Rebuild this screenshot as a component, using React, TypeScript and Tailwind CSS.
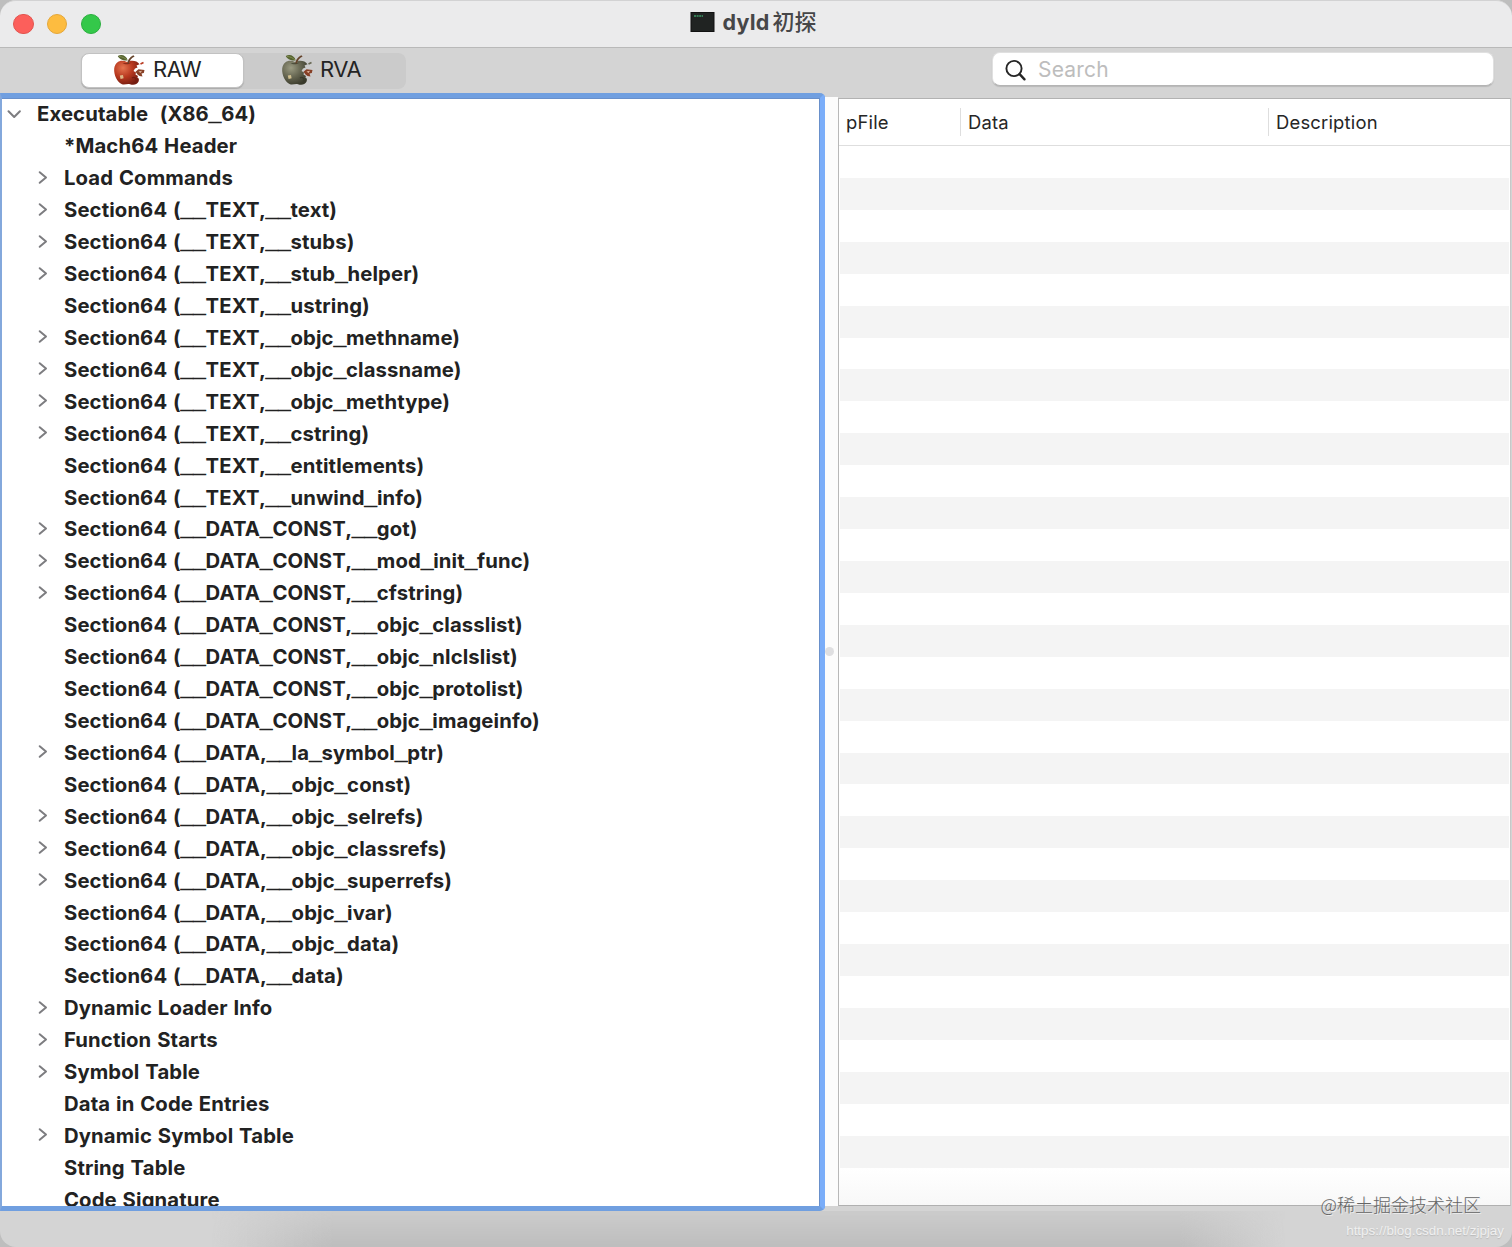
import React from "react";

type Row = { label: string; arrow?: boolean };

const ROWS: Row[] = [
  { label: "*Mach64 Header" },
  { label: "Load Commands", arrow: true },
  { label: "Section64 (__TEXT,__text)", arrow: true },
  { label: "Section64 (__TEXT,__stubs)", arrow: true },
  { label: "Section64 (__TEXT,__stub_helper)", arrow: true },
  { label: "Section64 (__TEXT,__ustring)" },
  { label: "Section64 (__TEXT,__objc_methname)", arrow: true },
  { label: "Section64 (__TEXT,__objc_classname)", arrow: true },
  { label: "Section64 (__TEXT,__objc_methtype)", arrow: true },
  { label: "Section64 (__TEXT,__cstring)", arrow: true },
  { label: "Section64 (__TEXT,__entitlements)" },
  { label: "Section64 (__TEXT,__unwind_info)" },
  { label: "Section64 (__DATA_CONST,__got)", arrow: true },
  { label: "Section64 (__DATA_CONST,__mod_init_func)", arrow: true },
  { label: "Section64 (__DATA_CONST,__cfstring)", arrow: true },
  { label: "Section64 (__DATA_CONST,__objc_classlist)" },
  { label: "Section64 (__DATA_CONST,__objc_nlclslist)" },
  { label: "Section64 (__DATA_CONST,__objc_protolist)" },
  { label: "Section64 (__DATA_CONST,__objc_imageinfo)" },
  { label: "Section64 (__DATA,__la_symbol_ptr)", arrow: true },
  { label: "Section64 (__DATA,__objc_const)" },
  { label: "Section64 (__DATA,__objc_selrefs)", arrow: true },
  { label: "Section64 (__DATA,__objc_classrefs)", arrow: true },
  { label: "Section64 (__DATA,__objc_superrefs)", arrow: true },
  { label: "Section64 (__DATA,__objc_ivar)" },
  { label: "Section64 (__DATA,__objc_data)" },
  { label: "Section64 (__DATA,__data)" },
  { label: "Dynamic Loader Info", arrow: true },
  { label: "Function Starts", arrow: true },
  { label: "Symbol Table", arrow: true },
  { label: "Data in Code Entries" },
  { label: "Dynamic Symbol Table", arrow: true },
  { label: "String Table" },
  { label: "Code Signature" },
];

const STRIPES = Array.from({ length: 32 }, (_, i) => i);

const Apple = ({ id, light, mid, dark }: { id: string; light: string; mid: string; dark: string }) => (
  <svg width="32" height="32" viewBox="0 0 32 32" className="-mt-[2px] shrink-0">
    <defs>
      <radialGradient id={id} cx="0.35" cy="0.3" r="0.75">
        <stop offset="0" stopColor={light} />
        <stop offset="0.5" stopColor={mid} />
        <stop offset="1" stopColor={dark} />
      </radialGradient>
    </defs>
    <path
      d="M14 8C9 5 2 7 1.2 14.5C.6 21 4.500 28.500 9 30.300C12 31.200 14 29.500 17 30.200C20 31.400 24 31 25.500 27.800C26.600 25.200 25.500 24 24.300 23.500L25 22L22.500 20.500L23 18.500L20.500 17L22 14.500L24.500 13.500L23.500 11.500L26.500 10.200C24 6.300 18 5.800 14 8Z"
      fill={`url(#${id})`}
    />
    <path d="M9.500 9C12 11 17 10.500 18.500 8.200C16 9.500 13 9 9.500 9Z" fill={dark} opacity="0.7" />
    <path d="M14.500 9.500C14.500 6 17 3 20.300 1.200L21.600 2.400C18.500 4 16.300 6.500 16 9.500Z" fill="#65432b" />
    <path d="M14.700 6.500C10 7.200 6 4.800 4.800 2C8.500-.2 13.500 1.500 14.700 6.500Z" fill="#55632f" />
    <path d="M6 2.500C9 2.500 12 4 14 6" stroke="#8b9658" strokeWidth="0.8" fill="none" />
    <path d="M22.500 17.800L25.500 15.300L31.500 16L30.800 19L28.500 19.500L29.500 22.500L26.500 22L24.500 20.500Z" fill="#874026" />
    <path d="M25.500 17.500L29 16.800L27.500 19Z" fill="#e2b79e" />
    <path d="M27.500 10L30.500 8.500" stroke={mid} strokeWidth="1.600" />
    <path d="M6.800 21.500L10 21L10.600 24.200L7.600 25Z" fill="#e3cf9a" opacity="0.85" />
    <path d="M19 24C21 22.500 23.500 24 23 27" stroke={dark} strokeWidth="1.200" fill="none" />
  </svg>
);

const Chevron = ({ open }: { open?: boolean }) => (
  <svg width="16" height="16" viewBox="0 0 16 16" fill="none" stroke="#7d7d80" strokeWidth="2" strokeLinecap="round" strokeLinejoin="round" className="-mt-[2px] block shrink-0">
    <path d={open ? "M2.500 5.200L8.200 11L13.900 5.200" : "M4.700 2.200L11 7.500L4.700 12.800"} />
  </svg>
);

// underscores are set wider than Inter's own so that doubled ones join up
const Label = ({ text }: { text: string }) => (
  <span className="-mt-px whitespace-pre leading-[30px] tracking-[0.120px] [word-spacing:0.900px]">
    {text.split(/(_+)/).map((part, i) =>
      part.startsWith("_") ? (
        <span key={i} className="align-[1px] font-['Liberation_Sans',sans-serif] text-[22.200px] leading-none tracking-normal [-webkit-text-stroke:0.700px_#222]">{part}</span>
      ) : (
        part
      )
    )}
  </span>
);

const TitleBar = () => (
  <header className="grid h-12 shrink-0 grid-cols-3 items-center rounded-t-[16px] border-t border-b border-t-[#d2d2d3] border-b-[#b9b9b9] bg-[#ebebec]">
    <div className="flex gap-[13.400px] pl-[13px]">
      <span className="size-[20.500px] rounded-full border border-[#e2544f] bg-[#fc5f5b]" />
      <span className="size-[20.500px] rounded-full border border-[#e4a73a] bg-[#fdbc40]" />
      <span className="size-[20.500px] rounded-full border border-[#2baf3f] bg-[#34c84a]" />
    </div>
    <div className="flex items-center justify-center pr-[6px] pb-[3px] text-[#464648]">
      <svg width="25" height="22" viewBox="0 0 25 22" className="-mt-px mr-[8px]">
        <rect x="1" y="1.500" width="23" height="19" fill="#202322" stroke="#111" strokeWidth="1" />
        <path d="M4 5H13" stroke="#3c9967" strokeWidth="1.300" strokeDasharray="2 0.600" />
      </svg>
      <span className="text-[21.500px] font-bold leading-none tracking-[0.200px]">dyld</span>
      <span className="mt-[-5px] ml-[3px] font-['Noto_Sans_CJK_SC',sans-serif] text-[22px] font-medium leading-none">初探</span>
    </div>
  </header>
);

const Toolbar = () => (
  <div className="flex h-[45px] shrink-0 items-start justify-between pt-[5px] pr-[18px] pl-[81px]">
    <div className="flex h-[36px] w-[325px] rounded-[8px] bg-[#cbcbcb] text-[22px] text-[#242424]">
      <button className="flex h-[35px] w-[163px] items-center rounded-[8px] border border-[#c2c2c2] bg-white pl-[31px] shadow-[0_1px_1px_#aaa]">
        <Apple id="red" light="#e57550" mid="#b93a20" dark="#741c10" />
        <span className="-mt-[2px] ml-[8px] tracking-[-0.500px]">RAW</span>
      </button>
      <button className="flex h-[35px] items-center pl-[37px]">
        <Apple id="olive" light="#9b9b82" mid="#686853" dark="#393a2b" />
        <span className="-mt-[2px] ml-[7px] tracking-[-0.500px]">RVA</span>
      </button>
    </div>
    <div className="mt-[-1px] flex h-[34px] w-[502px] items-center rounded-[8px] border border-[#e0e0e0] border-b-[#b4b4b4] bg-white pl-[11px] shadow-[0_1px_1px_#b8b8b8]">
      <svg width="24" height="24" viewBox="0 0 24 24" fill="none" stroke="#252525" strokeWidth="1.900" strokeLinecap="round" className="mt-px">
        <circle cx="10" cy="10.500" r="7.600" />
        <path d="M15.600 16.200L20.500 21.300" strokeWidth="2.400" />
      </svg>
      <span className="mt-[2px] ml-[10px] text-[21px] tracking-[0.200px] text-[#bdbdbd]">Search</span>
    </div>
  </div>
);

const Outline = () => (
  <div className="h-[1118px] w-[825px] shrink-0 overflow-hidden rounded-r-[5px] border-y-[5px] border-r-[5px] border-l-2 border-y-[#709fe0] border-r-[#7aadf9] border-l-[#83a8dc] bg-white">
    <div className="h-full overflow-hidden border-t border-r border-[#6990cb] text-[20.300px] font-bold text-[#222]">
      <div className="flex h-[31.930px] items-center pl-[4px]">
        <Chevron open />
        <span className="w-[15px] shrink-0" />
        <Label text="Executable  (X86_64)" />
      </div>
      {ROWS.map((row) => (
        <div key={row.label} className="flex h-[31.930px] items-center pl-[33px]">
          <span className="w-[29px] shrink-0">{row.arrow && <Chevron />}</span>
          <Label text={row.label} />
        </div>
      ))}
    </div>
  </div>
);

const DataTable = () => (
  <div className="flex h-[1108px] flex-1 flex-col overflow-hidden border border-t-[#b2b2b2] border-r-[#c8c8c8] border-b-[#b0b0b0] border-l-[#b8b8b8] bg-white">
    <div className="flex h-[47px] shrink-0 items-center border-b border-[#dedede] text-[18.400px] tracking-[0.200px] text-[#262626]">
      <div className="flex h-7 w-[122px] items-center border-r border-[#dedede] pt-[2px] pl-[7px]">pFile</div>
      <div className="flex h-7 w-[308px] items-center border-r border-[#dedede] pt-[2px] pl-[7px]">Data</div>
      <div className="pt-[2px] pl-[7px]">Description</div>
    </div>
    <div className="mx-px">
      {STRIPES.map((i) => (
        <div key={i} className={i % 2 ? "h-[31.930px] bg-[#f4f4f4]" : "h-[31.930px] bg-white"} />
      ))}
    </div>
    <div className="flex-1 bg-linear-to-b from-white to-[#f8f8f8]" />
  </div>
);

export default function App() {
  return (
    <div className="h-[1247px] w-[1512px] overflow-hidden bg-[#bebebe] font-[Inter,'Noto_Sans_CJK_SC',sans-serif]">
      <div className="relative flex h-full flex-col overflow-hidden rounded-[16px] bg-[#d4d4d4]">
        <TitleBar />
        <Toolbar />
        <main className="flex h-[1118px] shrink-0 pr-px">
          <Outline />
          {/* split view handle */}
          <div className="mt-[4px] flex h-[1109px] w-[13px] shrink-0 items-center bg-[#fcfcfc]">
            <span className="size-[9px] rounded-full bg-[#dfdfe1]" />
          </div>
          <div className="flex flex-1 pt-[5px]">
            <DataTable />
          </div>
        </main>
        <footer className="flex-1 bg-[linear-gradient(90deg,transparent_14%,#bdbdbd_22%,#bdbdbd_78%,transparent_85%)] mask-[linear-gradient(to_bottom,rgba(0,0,0,0.35),black)]" />
        {/* watermarks */}
        <div className="absolute top-[1192px] right-[31px] font-['Noto_Sans_CJK_SC',sans-serif] text-[18px] leading-[24px] font-light text-[#656565] [text-shadow:1px_1px_0_#eee]">@稀土掘金技术社区</div>
        <div className="absolute top-[1222px] right-[8px] font-['Liberation_Sans',sans-serif] text-[13.400px] leading-[18px] text-[#f0f0f0] [text-shadow:0_1px_1px_#b9b9b9]">https://blog.csdn.net/zjpjay</div>
      </div>
    </div>
  );
}
